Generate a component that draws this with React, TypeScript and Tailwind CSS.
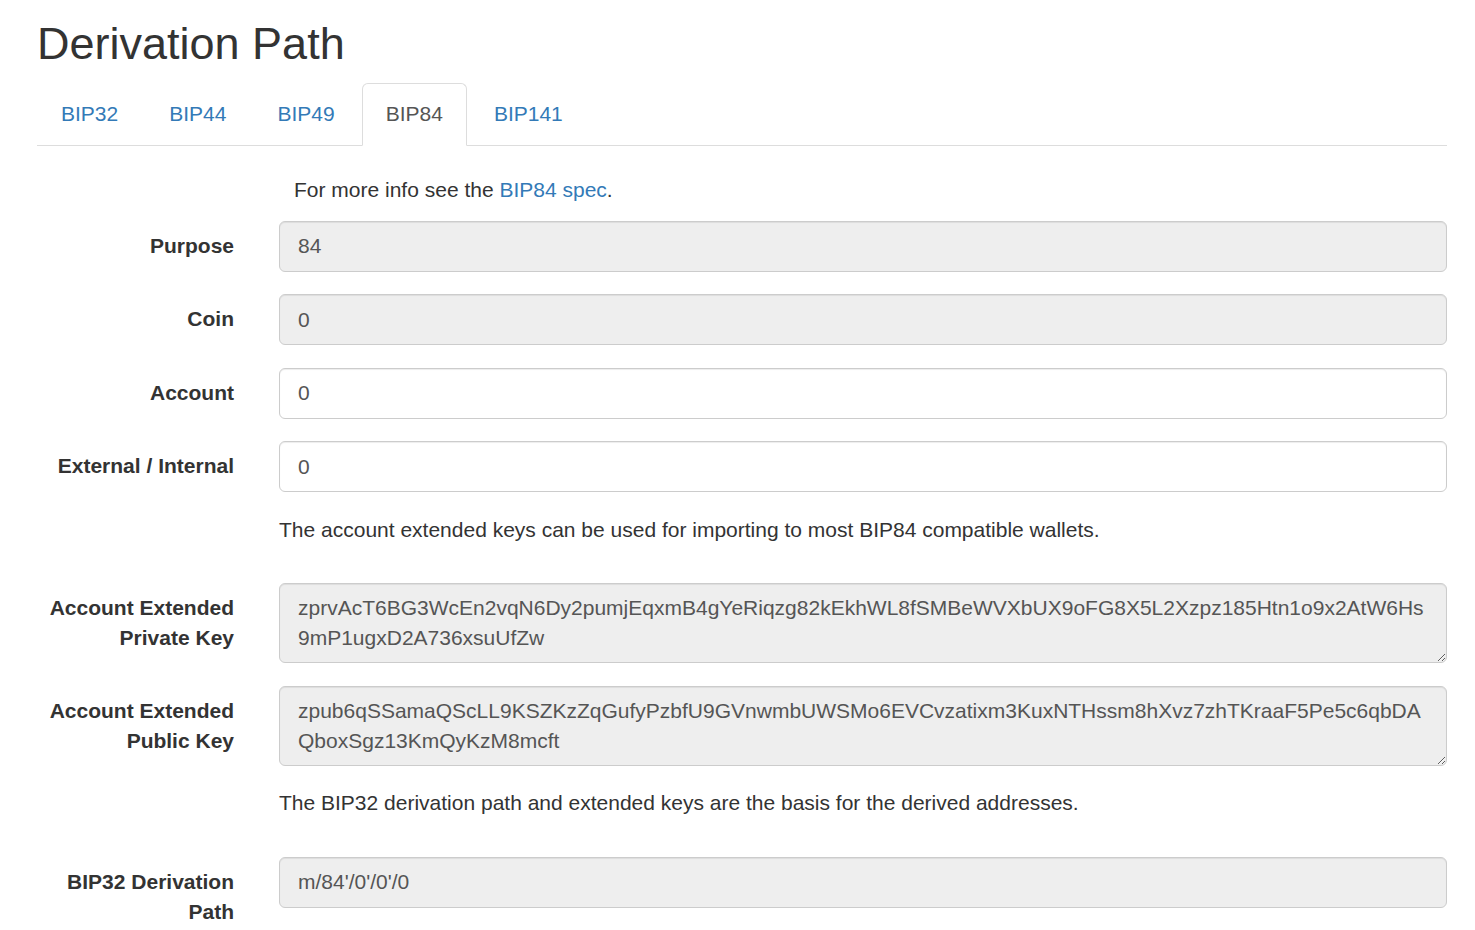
const TABS = ["BIP32", "BIP44", "BIP49", "BIP84", "BIP141"];

const PRIV_KEY =
  "zprvAcT6BG3WcEn2vqN6Dy2pumjEqxmB4gYeRiqzg82kEkhWL8fSMBeWVXbUX9oFG8X5L2Xzpz185Htn1o9x2AtW6Hs9mP1ugxD2A736xsuUfZw";
const PUB_KEY =
  "zpub6qSSamaQScLL9KSZKzZqGufyPzbfU9GVnwmbUWSMo6EVCvzatixm3KuxNTHssm8hXvz7zhTKraaF5Pe5c6qbDAQboxSgz13KmQyKzM8mcft";

const inputCls =
  "block w-full h-[51px] rounded-[6px] border border-[#ccc] px-[18px] py-[9px] text-[21px] leading-[30px] text-[#555] shadow-[inset_0_1px_1px_rgba(0,0,0,0.075)] outline-none";

const Label = ({ children }: { children: React.ReactNode }) => (
  <label className="w-[242px] shrink-0 px-[22.5px] pt-[10px] text-right text-[21px] font-bold leading-[30px] text-[#333]">
    {children}
  </label>
);

const Row = ({ label, children }: { label: string; children: React.ReactNode }) => (
  <div className="-mx-[22.5px] mb-[22.5px] flex">
    <Label>{label}</Label>
    <div className="flex-1 px-[22.5px]">{children}</div>
  </div>
);

const Field = ({ label, value, readOnly }: { label: string; value: string; readOnly?: boolean }) => (
  <Row label={label}>
    <input
      type="text"
      readOnly
      value={value}
      className={`${inputCls} ${readOnly ? "bg-[#eee]" : "bg-white"}`}
    />
  </Row>
);

const KeyArea = ({ label, value }: { label: string; value: string }) => (
  <Row label={label}>
    <textarea
      readOnly
      rows={2}
      value={value}
      className="block h-[80px] w-full resize-y rounded-[6px] border border-[#ccc] bg-[#eee] px-[18px] py-[9px] text-[21px] leading-[30px] text-[#555] shadow-[inset_0_1px_1px_rgba(0,0,0,0.075)] outline-none [overflow-wrap:anywhere]"
    />
  </Row>
);

const Note = ({ children }: { children: React.ReactNode }) => (
  <div className="-mx-[22.5px] flex">
    <div className="w-[242px] shrink-0" />
    <p className="flex-1 px-[22.5px] text-[21px] leading-[30px] text-[#333]">{children}</p>
  </div>
);

export default function App() {
  return (
    <div
      className="min-h-screen bg-white pb-10 text-[#333]"
      style={{ fontFamily: '"Liberation Sans", Arial, Helvetica, sans-serif' }}
    >
      <div className="ml-[37px] w-[1410px]">
        {/* 타이틀 */}
        <h2 className="mt-[19px] mb-[14px] text-[45px] leading-[1.1] font-normal text-[#333]">Derivation Path</h2>

        {/* 탭 */}
        <ul className="flex border-b border-[#ddd]">
          {TABS.map((tab) => {
            const active = tab === "BIP84";
            return (
              <li key={tab} className="-mb-px mr-[3px]">
                <a
                  href="#"
                  className={`block rounded-t-[6px] border px-[23px] py-[15.5px] text-[21px] leading-[30px] ${
                    active ? "border-[#ddd] border-b-transparent bg-white text-[#555]" : "border-transparent text-[#337ab7]"
                  }`}
                >
                  {tab}
                </a>
              </li>
            );
          })}
        </ul>

        {/* 내용 */}
        <div className="pt-[29px]">
          <p className="mb-[16px] pl-[257px] text-[21px] leading-[30px] text-[#333]">
            For more info see the <a href="#" className="text-[#337ab7]">BIP84 spec</a>.
          </p>

          <Field label="Purpose" value="84" readOnly />
          <Field label="Coin" value="0" readOnly />
          <Field label="Account" value="0" />
          <Field label="External / Internal" value="0" />

          <Note>The account extended keys can be used for importing to most BIP84 compatible wallets.</Note>
          <div className="h-[38.5px]" />

          <KeyArea label="Account Extended Private Key" value={PRIV_KEY} />
          <KeyArea label="Account Extended Public Key" value={PUB_KEY} />

          <Note>The BIP32 derivation path and extended keys are the basis for the derived addresses.</Note>
          <div className="h-[38.5px]" />

          <Field label="BIP32 Derivation Path" value="m/84'/0'/0'/0" readOnly />
        </div>
      </div>
    </div>
  );
}
